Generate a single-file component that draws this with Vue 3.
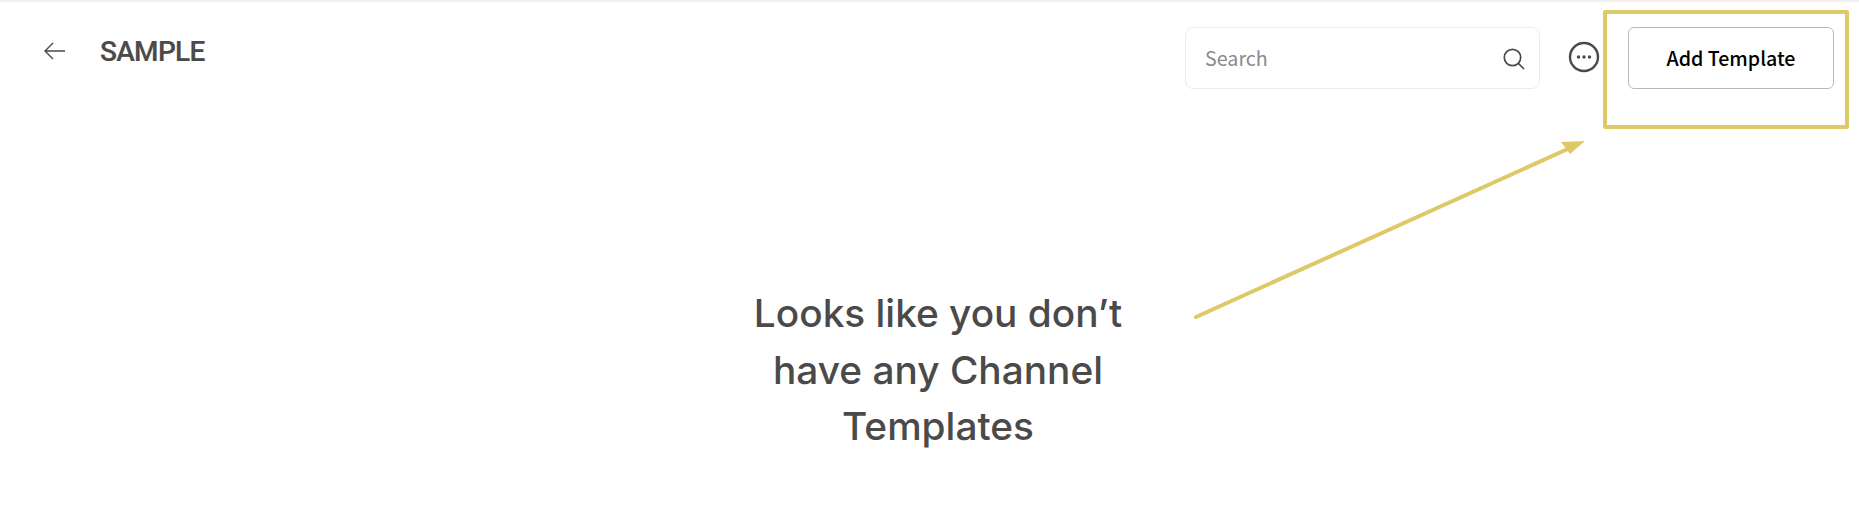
<template>
  <div class="page">
    <header class="header">
      <div class="title-group">
        <button class="back" aria-label="Back">
          <svg width="22" height="18" viewBox="0 0 22 18" fill="none" stroke="#4a4a4a" stroke-width="1.4">
            <path d="M21 9H1M9 1 1 9l8 8" />
          </svg>
        </button>
        <h1 class="title">SAMPLE</h1>
      </div>
      <div class="actions">
        <div class="search">
          <span class="placeholder">Search</span>
          <svg class="search-icon" width="22" height="22" viewBox="0 0 22 22" fill="none" stroke="#4a4a4a" stroke-width="1.7">
            <circle cx="9.5" cy="9.5" r="8.2" />
            <path d="M15.5 15.5 21 21" />
          </svg>
        </div>
        <svg class="more" width="32" height="32" viewBox="0 0 32 32" fill="none">
          <circle cx="16" cy="16" r="14" stroke="#4a4a4a" stroke-width="2.4" />
          <circle cx="10.5" cy="16" r="1.7" fill="#4a4a4a" />
          <circle cx="16" cy="16" r="1.7" fill="#4a4a4a" />
          <circle cx="21.5" cy="16" r="1.7" fill="#4a4a4a" />
        </svg>
        <button class="add">Add Template</button>
      </div>
    </header>
    <main class="empty">
      <p class="message">Looks like you don’t have any Channel Templates</p>
    </main>
    <svg class="annotation" width="1859" height="512" viewBox="0 0 1859 512" fill="none">
      <rect x="1605" y="12" width="242" height="115" stroke="#dfc866" stroke-width="4" stroke-linejoin="round" />
      <path d="M1196 317 1570 148" stroke="#dfc866" stroke-width="4" stroke-linecap="round" />
      <path d="M1585 141 1561 142 1570 154Z" fill="#dfc866" />
    </svg>
  </div>
</template>

<script setup>
</script>

<style>
html, body { background: #fff; }
</style>

<style scoped>
.page {
  position: relative;
  width: 1859px;
  height: 512px;
  box-sizing: border-box;
  border-top: 2px solid #f0f0f0;
  background: #fff;
  overflow: hidden;
}
.header {
  display: flex;
  justify-content: space-between;
  align-items: flex-start;
  padding: 25px 25px 0 44px;
}
.title-group {
  display: flex;
  align-items: center;
  gap: 34px;
  height: 48px;
}
.back {
  display: flex;
  padding: 0;
  border: 0;
  background: none;
}
.title {
  margin: 0;
  padding-top: 2px;
  font: 500 28px/50px Roboto, sans-serif;
  letter-spacing: -0.7px;
  -webkit-text-stroke: 0.2px #4a4a4a;
  color: #4a4a4a;
}
.actions {
  display: flex;
  align-items: center;
  height: 62px;
}
.search {
  display: flex;
  align-items: center;
  justify-content: space-between;
  box-sizing: border-box;
  width: 355px;
  height: 62px;
  padding: 0 14px 0 19px;
  border: 1px solid #ececec;
  border-radius: 8px;
}
.placeholder {
  padding-bottom: 2px;
  font: 400 19.7px "Noto Sans CJK SC", "Noto Sans", sans-serif;
  color: #8a8a8a;
}
.search-icon {
  margin-top: 2px;
}
.more {
  margin-left: 28px;
  margin-top: -2px;
}
.add {
  box-sizing: border-box;
  width: 206px;
  height: 62px;
  margin-left: 28px;
  padding-bottom: 2px;
  border: 1px solid #b9b9b9;
  border-radius: 6px;
  background: #fff;
  font: 500 19.6px "Noto Sans CJK SC", "Noto Sans", sans-serif;
  color: #000;
}
.empty {
  display: flex;
  justify-content: center;
  padding: 196px 0 0 17px;
}
.message {
  width: 400px;
  margin: 0;
  text-align: center;
  font: 500 38.8px/56.5px Inter, sans-serif;
  color: #4a4a4a;
}
.annotation {
  position: absolute;
  top: -2px;
  left: 0;
  pointer-events: none;
}
</style>
